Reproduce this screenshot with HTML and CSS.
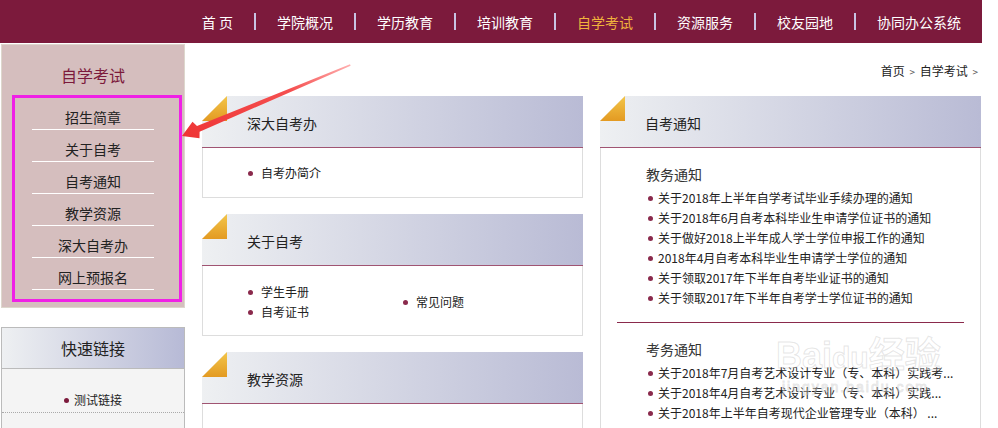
FILE: index.html
```html
<!DOCTYPE html>
<html lang="zh-CN">

<head>
    <meta charset="utf-8">
    <meta name="viewport" content="width=device-width, initial-scale=1.0">
    <title>自学考试</title>
    <link rel="stylesheet" href="styles.css">
</head>

<body>
<div class="page">

    <header class="topbar">
        <ul class="nav">
            <li><a href="#">首&nbsp;页</a></li>
            <li><a href="#">学院概况</a></li>
            <li><a href="#">学历教育</a></li>
            <li><a href="#">培训教育</a></li>
            <li><a href="#" class="valgt">自学考试</a></li>
            <li><a href="#">资源服务</a></li>
            <li><a href="#">校友园地</a></li>
            <li><a href="#">协同办公系统</a></li>
        </ul>
    </header>

    <div class="main">
        <aside class="side">
            <div class="side-menu">
                <h2>自学考试</h2>
                <div class="side-box">
                    <ul class="side-list">
                        <li><a href="#">招生简章</a></li>
                        <li><a href="#">关于自考</a></li>
                        <li><a href="#">自考通知</a></li>
                        <li><a href="#">教学资源</a></li>
                        <li><a href="#">深大自考办</a></li>
                        <li><a href="#">网上预报名</a></li>
                    </ul>
                </div>
            </div>

            <div class="quick">
                <h3>快速链接</h3>
                <ul class="quick-list">
                    <li><a href="#">测试链接</a></li>
                </ul>
            </div>
        </aside>

        <section class="content">
            <div class="crumb"><a href="#">首页</a> <span>&gt;</span> <a href="#">自学考试</a> <span>&gt;</span></div>

            <div class="cols">
                <div class="col-mid">
                    <div class="panel">
                        <div class="panel-head">
                            <svg class="corner" width="25" height="25" viewBox="0 0 25 25">
                                <defs>
                                    <linearGradient id="guld" x1="0" y1="0" x2="0" y2="1">
                                        <stop offset="0" stop-color="#f3c64a"/>
                                        <stop offset="1" stop-color="#e39a22"/>
                                    </linearGradient>
                                </defs>
                                <polygon points="0,0 25,0 0,25" fill="#fff"/>
                                <polygon points="25,0 25,25 0,25" fill="url(#guld)"/>
                            </svg>
                            <h3>深大自考办</h3>
                        </div>
                        <div class="panel-body">
                            <ul class="dots">
                                <li><a href="#">自考办简介</a></li>
                            </ul>
                        </div>
                    </div>

                    <div class="panel">
                        <div class="panel-head">
                            <svg class="corner" width="25" height="25" viewBox="0 0 25 25">
                                <polygon points="0,0 25,0 0,25" fill="#fff"/>
                                <polygon points="25,0 25,25 0,25" fill="url(#guld)"/>
                            </svg>
                            <h3>关于自考</h3>
                        </div>
                        <div class="panel-body two">
                            <ul class="dots first">
                                <li><a href="#">学生手册</a></li>
                                <li><a href="#">自考证书</a></li>
                            </ul>
                            <ul class="dots">
                                <li><a href="#">常见问题</a></li>
                            </ul>
                        </div>
                    </div>

                    <div class="panel">
                        <div class="panel-head">
                            <svg class="corner" width="25" height="25" viewBox="0 0 25 25">
                                <polygon points="0,0 25,0 0,25" fill="#fff"/>
                                <polygon points="25,0 25,25 0,25" fill="url(#guld)"/>
                            </svg>
                            <h3>教学资源</h3>
                        </div>
                        <div class="panel-body tall"></div>
                    </div>
                </div>

                <div class="col-right">
                    <div class="panel">
                        <div class="panel-head">
                            <svg class="corner" width="25" height="25" viewBox="0 0 25 25">
                                <polygon points="0,0 25,0 0,25" fill="#fff"/>
                                <polygon points="25,0 25,25 0,25" fill="url(#guld)"/>
                            </svg>
                            <h3>自考通知</h3>
                        </div>
                        <div class="panel-body notices">
                            <h4>教务通知</h4>
                            <ul class="dots small">
                                <li><a href="#">关于2018年上半年自学考试毕业手续办理的通知</a></li>
                                <li><a href="#">关于2018年6月自考本科毕业生申请学位证书的通知</a></li>
                                <li><a href="#">关于做好2018上半年成人学士学位申报工作的通知</a></li>
                                <li><a href="#">2018年4月自考本科毕业生申请学士学位的通知</a></li>
                                <li><a href="#">关于领取2017年下半年自考毕业证书的通知</a></li>
                                <li><a href="#">关于领取2017年下半年自考学士学位证书的通知</a></li>
                            </ul>
                            <hr>
                            <h4>考务通知</h4>
                            <ul class="dots small">
                                <li><a href="#">关于2018年7月自考艺术设计专业（专、本科）实践考...</a></li>
                                <li><a href="#">关于2018年4月自考艺术设计专业（专、本科）实践...</a></li>
                                <li><a href="#">关于2018年上半年自考现代企业管理专业（本科） ...</a></li>
                            </ul>
                        </div>
                    </div>
                </div>
            </div>
        </section>
    </div>

    <div class="watermark">Bai<span>du</span>经验<small>jingyan.baidu.com</small></div>

    <!-- annotation arrow -->
    <svg class="pil" width="175" height="85" viewBox="0 0 175 85">
        <defs>
            <linearGradient id="rod" x1="1" y1="0" x2="0" y2="1">
                <stop offset="0" stop-color="#ffb0b0"/>
                <stop offset="0.35" stop-color="#f55050"/>
                <stop offset="1" stop-color="#ee3434"/>
            </linearGradient>
        </defs>
        <polygon points="2,76 12.5,61.7 17,66 170,4.3 170.6,5.7 19.6,71.8 19.5,78.3" fill="url(#rod)"/>
    </svg>

</div>
</body>

</html>
```

FILE: styles.css
```css
*{
    box-sizing: border-box;
    padding: 0;
    margin: 0;
}

body {
    font-family: "Noto Sans CJK SC", "Liberation Sans", sans-serif;
    font-size: 12px;
    color: #222;
    background: #fff;
}

a {
    color: inherit;
    text-decoration: none;
}

ul {
    list-style: none;
}

.page {
    position: relative;
    width: 982px;
}

/* top menu */
.topbar {
    height: 43px;
    background-color: #7c1a3c;
}

.nav {
    display: flex;
    justify-content: flex-end;
    height: 43px;
}

.nav li {
    display: flex;
    align-items: center;
}

.nav li + li::before {
    content: "";
    display: block;
    width: 2px;
    height: 17px;
    background: #c9c3e3;
}

.nav a {
    display: block;
    padding: 0 21px;
    font-size: 14px;
    line-height: 20px;
    color: #fff;
    margin-top: 1px;
}

.nav a.valgt {
    color: #f0b43c;
}

.main {
    display: flex;
    align-items: flex-start;
}

/* left column */
.side {
    width: 184px;
    margin-left: 1px;
}

.side-menu {
    margin-top: 1px;
    background: #d5bebe;
    border: 1px solid #ddd7cd;
    padding-bottom: 5px;
}

.side-menu h2 {
    font-weight: normal;
    font-size: 16px;
    line-height: 24px;
    padding-top: 18px;
    margin-bottom: 8px;
    text-align: center;
    color: #7c1a3c;
}

.side-box {
    width: 170px;
    margin-left: 10px;
    border: 3px solid #f020e6;
    padding-bottom: 9px;
}

.side-list li {
    width: 122px;
    margin-left: 17px;
    padding: 9px 0 2px;
    line-height: 20px;
    font-size: 14px;
    text-align: center;
    border-bottom: 1px solid #fff;
}

.quick {
    margin-top: 19px;
    border: 1px solid #bbb;
    background: #f4f4f4;
}

.quick h3 {
    font-weight: normal;
    font-size: 16px;
    line-height: 40px;
    text-align: center;
    color: #222;
    background: linear-gradient(to right, #eef0f2, #b7bad6);
    border-bottom: 1px solid #bbb;
}

.quick-list li {
    padding: 22px 0 3px;
    line-height: 18px;
    text-align: center;
    border-bottom: 1px dotted #aaa;
}

.quick-list li::before {
    content: "";
    display: inline-block;
    width: 5px;
    height: 5px;
    border-radius: 50%;
    background: #7c1a3c;
    margin-right: 5px;
    vertical-align: 2px;
}

.quick-list {
    padding-bottom: 20px;
}

/* content */
.content {
    margin-left: 17px;
    width: 780px;
}

.crumb {
    text-align: right;
    padding: 18px 2px 0 0;
    line-height: 20px;
    margin-bottom: 14px;
    color: #222;
}

.crumb span {
    color: #555;
    font-size: 10px;
    margin: 0 2px;
}

.cols {
    display: flex;
    gap: 17px;
}

.col-mid {
    width: 381px;
    display: flex;
    flex-direction: column;
    gap: 16px;
}

.col-right {
    width: 381px;
}

.panel-head {
    position: relative;
    background: linear-gradient(to right, #eef0f2, #b9bbd5);
    border-bottom: 1px solid #a05472;
    padding: 17px 0 14px 45px;
}

.panel-head h3 {
    font-weight: normal;
    font-size: 14px;
    line-height: 20px;
    color: #222;
}

.corner {
    position: absolute;
    left: 0;
    top: 0;
}

.panel-body {
    border: 1px solid #ddd;
    border-top: none;
    padding: 15px 0 14px 45px;
}

.panel-body.two {
    display: flex;
    align-items: center;
    padding-top: 16px;
    padding-bottom: 13px;
}

.panel-body.tall {
    height: 60px;
}

.dots li {
    line-height: 20px;
}

.dots li::before {
    content: "";
    display: inline-block;
    width: 5px;
    height: 5px;
    border-radius: 50%;
    background: #8a2a4c;
    margin-right: 8px;
    vertical-align: 2px;
}

.dots.first {
    width: 155px;
}

.notices {
    padding: 16px 16px 8px 16px;
}

.notices h4 {
    font-weight: normal;
    font-size: 14px;
    line-height: 20px;
    color: #333;
    padding-left: 29px;
    margin-bottom: 4px;
}

.dots.small {
    padding-left: 31px;
}

.dots.small li::before {
    margin-right: 5px;
}

.notices hr {
    border: none;
    border-top: 1px solid #8a2a4c;
    margin: 14px 0 16px;
}

/* faint photo watermark */
.watermark {
    position: absolute;
    left: 776px;
    top: 336px;
    white-space: nowrap;
    font-family: "Liberation Sans", "Noto Sans CJK SC", sans-serif;
    font-size: 36px;
    font-weight: bold;
    line-height: 40px;
    color: rgba(255,255,255,0.3);
    -webkit-text-stroke: 1px rgba(170,170,170,0.3);
    pointer-events: none;
}

.watermark span {
    font-size: 30px;
}

.watermark small {
    display: block;
    font-size: 14px;
    line-height: 18px;
    font-weight: normal;
    letter-spacing: 2px;
    margin-left: 6px;
}

.pil {
    position: absolute;
    left: 180px;
    top: 60px;
    pointer-events: none;
}
```
